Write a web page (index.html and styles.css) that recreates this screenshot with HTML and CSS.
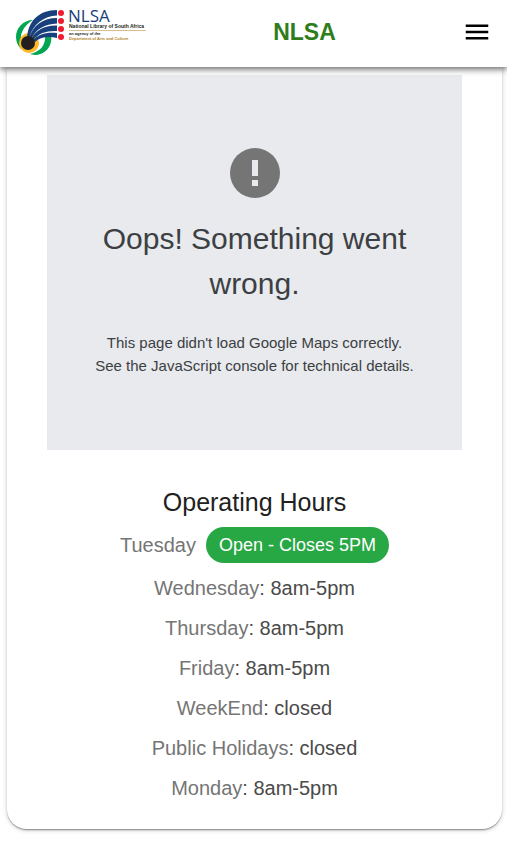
FILE: index.html
```html
<!DOCTYPE html>
<html lang="en">
<head>
<meta charset="utf-8">
<meta name="viewport" content="width=device-width, initial-scale=1">
<title>NLSA</title>
<link rel="stylesheet" href="styles.css">
</head>
<body>
<header class="app-bar">
  <a class="logo" href="#" aria-label="National Library of South Africa">
    <svg width="132" height="58" viewBox="0 -5 132 58">
      <path d="M18 12C8 12 1 20 1 29C1 34 3 38 6 41L9 38C5 33 5 27 8 22C10 18 13 15 18 12Z" fill="#00a651"/>
      <path d="M36 27C38 38 30 47 20 47C18 47 16 46 15 46C25 44 31 37 30 28Z" fill="#00a651"/>
      <circle cx="14" cy="35" r="10" fill="#fdb924"/>
      <g fill="#17407c">
        <path d="M12 30C13 13 24 2 42 2V7.500C29 8 18 16 14 30Z"/>
        <path d="M14 30C18 17 28 10 42 10V15.500C30 16 21 21 16 31Z"/>
        <path d="M16 31C21 22 30 17 42 17.500V23C32 22.500 24 25 18 32Z"/>
        <path d="M18 32C24 26 31 24 42 25V30C33 28 25 29 20 34Z"/>
      </g>
      <circle cx="13" cy="35" r="7" fill="#231f20"/>
      <g fill="#ed1c2e">
        <circle cx="46" cy="5" r="3"/><circle cx="46" cy="13" r="3"/>
        <circle cx="46" cy="21" r="3"/><circle cx="46" cy="29" r="3"/>
      </g>
      <text class="logo-name" x="53" y="14">NLSA</text>
      <text class="logo-full" x="54" y="20">National Library of South Africa</text>
      <path d="M54 22.500H131" stroke="#c8a45c" stroke-width="0.7"/>
      <text class="logo-agency" x="54" y="27">an agency of the</text>
      <text class="logo-agency logo-dept" x="54" y="32">Department of Arts and Culture</text>
    </svg>
  </a>
  <h1 class="app-title">NLSA</h1>
  <button class="menu-button" type="button" aria-label="Menu">
    <svg width="30" height="30" viewBox="0 0 24 24"><path d="M3 18h18v-2H3v2zm0-5h18v-2H3v2zm0-7v2h18V6H3z"/></svg>
  </button>
</header>
<main class="page">
  <section class="card">
    <div class="map-error">
      <svg width="50" height="50" viewBox="0 0 50 50"><circle cx="25" cy="25" r="25" fill="#757575"/><path d="M22 12h6v16h-6zM22 32h6v6h-6z" fill="#e8eaed"/></svg>
      <h2 class="map-title">Oops! Something went wrong.</h2>
      <p class="map-message">This page didn't load Google Maps correctly.<br>See the JavaScript console for technical details.</p>
    </div>
    <h2 class="hours-title">Operating Hours</h2>
    <ul class="hours">
      <li class="today">Tuesday <span class="badge">Open - Closes 5PM</span></li>
      <li>Wednesday<span class="time">: 8am-5pm</span></li>
      <li>Thursday<span class="time">: 8am-5pm</span></li>
      <li>Friday<span class="time">: 8am-5pm</span></li>
      <li>WeekEnd<span class="time">: closed</span></li>
      <li>Public Holidays<span class="time">: closed</span></li>
      <li>Monday<span class="time">: 8am-5pm</span></li>
    </ul>
  </section>
</main>
</body>
</html>
```
FILE: styles.css
```css
* { box-sizing: border-box; }

body {
  margin: 0;
  background: #fff;
  color: #212121;
  font-family: "Liberation Sans", Arial, sans-serif;
}

h1, h2, p, ul { margin: 0; padding: 0; font-weight: 400; }

.app-bar {
  position: sticky;
  top: 0;
  z-index: 1;
  display: flex;
  align-items: center;
  justify-content: space-between;
  height: 67px;
  padding: 0 15px 3px;
  background: #fff;
  box-shadow: 0 2px 4px -1px rgba(0, 0, 0, .2), 0 4px 5px rgba(0, 0, 0, .14), 0 1px 10px rgba(0, 0, 0, .12), 0 0 8px rgba(0, 0, 0, .4);
}

.logo svg, .menu-button svg, .map-error svg { display: block; }
.logo-name { font-family: "Open Sans", sans-serif; font-size: 17px; fill: #17407c; }
.logo-full { font-size: 5px; font-weight: 700; fill: #231f20; }
.logo-agency { font-size: 4px; font-weight: 700; fill: #231f20; }
.logo-dept { fill: #b38328; }

.app-title {
  color: #2e7d1a;
  font-size: 23px;
  font-weight: 700;
  line-height: 30px;
}

.menu-button { padding: 0; border: 0; background: none; color: #000; cursor: pointer; }

.page { padding: 0 5px 24px 7px; }

.card {
  padding: 8px 40px 21px;
  border-radius: 0 0 20px 20px;
  background: #fff;
  text-align: center;
  box-shadow: 0 2px 2px -1px rgba(0, 0, 0, .3), 0 1px 1px rgba(0, 0, 0, .14), 0 1px 5px rgba(0, 0, 0, .2);
}

.map-error {
  display: flex;
  flex-direction: column;
  align-items: center;
  min-height: 375px;
  padding: 73px 40px;
  background: #e8eaed;
  color: #3c4043;
}

.map-title { margin-top: 18px; font-size: 30px; line-height: 45px; }
.map-message { margin-top: 25px; font-size: 15px; line-height: 23px; }

.hours-title { margin-top: 36px; font-size: 25px; line-height: 32px; }

.hours { margin-top: 4px; list-style: none; color: #757575; font-size: 20px; line-height: 40px; }

.today {
  display: flex;
  align-items: center;
  justify-content: center;
  gap: 10px;
  height: 46px;
}

.time { color: #4a4a4a; }

.badge {
  padding: 0 13px;
  border-radius: 18px;
  background: #28a745;
  color: #fff;
  font-size: 18px;
  line-height: 36px;
}
```
